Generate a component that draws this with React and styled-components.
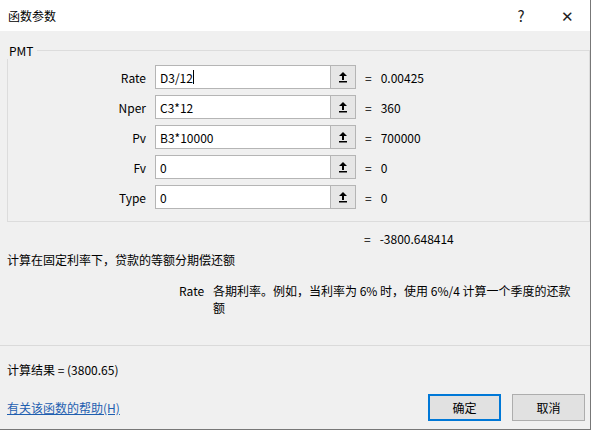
import React from "react";
import styled, { createGlobalStyle } from "styled-components";

const G = createGlobalStyle`
  html,body{margin:0;padding:0;background:#fff;}
  body{font-family:"Microsoft YaHei","Noto Sans CJK SC",sans-serif;font-size:12px;color:#000;}
`;
const Page = styled.div`width:596px;height:440px;position:relative;overflow:hidden;background:#fff;`;
const Dialog = styled.div`width:591px;height:430px;background:#f0f0f0;border-right:1px solid #777;border-bottom:1px solid #777;display:flex;flex-direction:column;box-sizing:border-box;`;
const Title = styled.div`height:31px;background:#fff;display:flex;align-items:center;padding:0 0 0 8px;font-size:12px;`;
const TitleText = styled.div`flex:1;`;
const TBtn = styled.div`width:46px;text-align:center;font-size:15px;color:#222;`;
const Body = styled.div`flex:1;padding:11px 0 0 7px;position:relative;display:flex;flex-direction:column;`;
const Group = styled.fieldset`margin:0;width:583px;box-sizing:border-box;border:1px solid #dcdcdc;padding:5px 0 7px 0;`;
const Legend = styled.legend`padding:0 3px;margin-left:-2px;font-size:12px;color:#000;`;
const Row = styled.div`display:flex;align-items:center;height:26px;margin-bottom:4px;`;
const Label = styled.div`width:138px;text-align:right;padding-right:9px;font-size:12px;`;
const Input = styled.div`width:176px;height:24px;border:1px solid #b5b5b5;background:#fff;display:flex;align-items:center;padding-left:4px;box-sizing:border-box;`;
const Pick = styled.div`width:25px;height:24px;border:1px solid #b5b5b5;border-left:none;background:#e6e6e6;display:flex;align-items:center;justify-content:center;box-sizing:border-box;`;
const Val = styled.div`margin-left:9px;display:flex;gap:9px;`;
const Caret = styled.span`display:inline-block;width:1px;height:14px;background:#000;vertical-align:middle;`;
const Result = styled.div`margin-left:357px;margin-top:8px;display:flex;gap:9px;`;
const Desc = styled.div`margin-top:4px;`;
const Arg = styled.div`display:flex;margin-top:14px;margin-left:172px;line-height:17px;`;
const ArgName = styled.div`width:34px;`;
const ArgText = styled.div`width:368px;`;
const Sep = styled.div`position:absolute;left:0;right:0;top:314px;height:1px;background:#dadada;`;
const Calc = styled.div`position:absolute;left:7px;top:330px;`;
const Link = styled.div`position:absolute;left:7px;top:368px;color:#1f5fb0;text-decoration:underline;`;
const Btn = styled.div`position:absolute;top:363px;left:${p=>p.x}px;width:73px;height:27px;box-sizing:border-box;background:#e1e1e1;border:${p=>p.primary?"2px solid #0078d7":"1px solid #adadad"};display:flex;align-items:center;justify-content:center;`;

const Arrow = () => (
  <svg width="10" height="12" viewBox="0 0 10 12"><path d="M5 1 L9 5 L6 5 L6 9 L4 9 L4 5 L1 5 Z" fill="#000"/><rect x="1" y="10" width="8" height="1.5" fill="#000"/></svg>
);

const rows = [["Rate","D3/12","0.00425",true],["Nper","C3*12","360"],["Pv","B3*10000","700000"],["Fv","0","0"],["Type","0","0"]];

export default function App(){
  return (<Page><G/><Dialog>
    <Title><TitleText>函数参数</TitleText><TBtn>?</TBtn><TBtn>✕</TBtn></Title>
    <Body>
      <Group><Legend>PMT</Legend>
        {rows.map(r=>(<Row key={r[0]}><Label>{r[0]}</Label><Input>{r[1]}{r[3]&&<Caret/>}</Input><Pick><Arrow/></Pick><Val><span>=</span><span>{r[2]}</span></Val></Row>))}
      </Group>
      <Result><span>=</span><span>-3800.648414</span></Result>
      <Desc>计算在固定利率下，贷款的等额分期偿还额</Desc>
      <Arg><ArgName>Rate</ArgName><ArgText>各期利率。例如，当利率为 6% 时，使用 6%/4 计算一个季度的还款额</ArgText></Arg>
      <Sep/>
      <Calc>计算结果 =  (3800.65)</Calc>
      <Link>有关该函数的帮助(H)</Link>
      <Btn x={428} primary>确定</Btn>
      <Btn x={512}>取消</Btn>
    </Body>
  </Dialog></Page>);
}
